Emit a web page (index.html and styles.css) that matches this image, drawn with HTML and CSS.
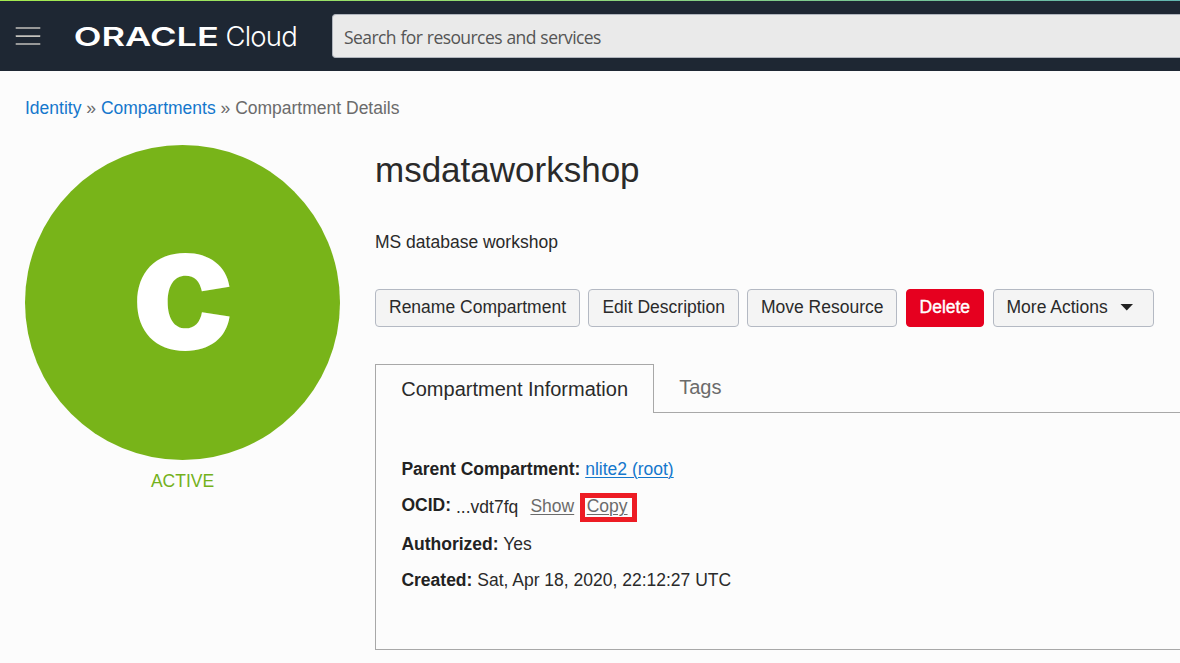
FILE: index.html
```html
<!DOCTYPE html>
<html lang="en">
<head>
<meta charset="utf-8">
<title>Compartment Details</title>
<link rel="stylesheet" href="styles.css">
</head>
<body>
<header class="topbar">
  <svg class="menu-icon" width="26" height="20" viewBox="0 0 26 20" fill="none">
    <path d="M.7 2H25.3M.7 10H25.3M.7 18H25.3" stroke="#979898" stroke-width="2"/>
    <path d="M1 10.5H25" stroke="#c4c3bd"/>
  </svg>
  <svg class="logo" width="224" height="30" viewBox="0 0 224 30" fill="#fff">
    <text class="logo-oracle" x="-1.2" y="24.5" textLength="145" lengthAdjust="spacingAndGlyphs">ORACLE</text>
    <text class="logo-cloud" x="150.5" y="24.7" textLength="71.5" lengthAdjust="spacingAndGlyphs">Cloud</text>
  </svg>
  <div class="search">Search for resources and services</div>
</header>
<nav class="breadcrumb"><a>Identity</a> » <a>Compartments</a> » Compartment Details</nav>
<main class="page">
  <aside class="status">
    <div class="badge">
      <svg width="315" height="315" viewBox="0 0 315 315">
        <text class="badge-letter" x="106" y="204" textLength="104.5" lengthAdjust="spacingAndGlyphs">c</text>
      </svg>
    </div>
    <div class="state">ACTIVE</div>
  </aside>
  <section class="details">
    <h1 class="title">msdataworkshop</h1>
    <p class="description">MS database workshop</p>
    <div class="actions">
      <button class="btn">Rename Compartment</button>
      <button class="btn snug">Edit Description</button>
      <button class="btn snug">Move Resource</button>
      <button class="btn danger">Delete</button>
      <button class="btn more">More Actions
        <svg width="14" height="8" viewBox="0 0 14 8"><path d="M.5 1H13L6.75 7.5Z" fill="#222"/></svg>
      </button>
    </div>
    <div class="tabs">
      <div class="tab active">Compartment Information</div>
      <div class="tab">Tags</div>
    </div>
    <div class="panel">
      <div class="row"><b>Parent Compartment:</b> <a class="link">nlite2 (root)</a></div>
      <div class="row ocid"><b>OCID:</b><span class="value">...vdt7fq</span><a class="muted">Show</a><a class="muted copy">Copy</a></div>
      <div class="row short"><b>Authorized:</b> Yes</div>
      <div class="row"><b>Created:</b> Sat, Apr 18, 2020, 22:12:27 UTC</div>
    </div>
  </section>
</main>
</body>
</html>
```
FILE: styles.css
```css
* { box-sizing: border-box; }
body {
  margin: 0;
  height: 663px;
  overflow: hidden;
  background: #fcfcfc;
  color: #2a2a2a;
  font: 17.5px/20px "Liberation Sans", Arial, sans-serif;
}
.topbar {
  height: 71px;
  display: flex;
  align-items: flex-start;
  background: linear-gradient(90deg, #a4ea4f, #8fd77a 50%, #62b5b0) top / 100% 1px no-repeat #1e2733;
}
.menu-icon { margin: 26px 0 0 15px; }
.logo { margin: 21px 0 0 34px; overflow: visible; }
.logo-oracle { font: 600 26px Inter, sans-serif; }
.logo-cloud { font: 300 27px Inter, sans-serif; letter-spacing: -.8px; }
.search {
  flex: 1;
  height: 44px;
  margin: 14px 0 0 33px;
  padding: 0 11px;
  border: 1px solid #b0b5bd;
  border-right: 0;
  border-radius: 4px 0 0 4px;
  background: #eaeaea;
  color: #555;
  font: 17.5px/45px "Open Sans", sans-serif;
  letter-spacing: -.57px;
  word-spacing: .5px;
  white-space: nowrap;
}
.breadcrumb { margin: 27px 0 0 25px; color: #6b6b6b; }
.breadcrumb a, .link { color: #1477cc; }
.page { display: flex; gap: 35px; padding: 27px 0 0 25px; }
.status { flex: none; width: 315px; }
.badge { height: 315px; border-radius: 50%; background: #78b419; }
.badge-letter { font: 800 174px Inter, sans-serif; fill: #fff; }
.state { margin-top: 11px; text-align: center; color: #74b11b; }
.details { flex: 1; min-width: 0; }
.title { margin: 5px 0 0; font-size: 35px; line-height: 40px; font-weight: 400; }
.description { margin: 42px 0 0; }
.actions { display: flex; margin-top: 37px; gap: 8.4px; }
.btn {
  height: 38px;
  padding: 0 13px 2px;
  border: 1px solid #b4b9c3;
  border-radius: 4px;
  background: #f4f4f4;
  color: #2a2a2a;
  font: inherit;
  white-space: nowrap;
}
.snug { padding-right: 12.6px; }
.danger { border-color: #e6001f; background: #e6001f; color: #fff; -webkit-text-stroke: .4px #fff; }
.more { display: flex; align-items: center; gap: 12.5px; padding-right: 18.5px; }
.tabs { display: flex; margin-top: 37px; height: 49px; font-size: 20px; line-height: 24px; }
.tab { padding: 11px 25.5px; color: #6b6b6b; border-bottom: 1px solid #a8a8a8; }
.tab:last-child { flex: 1; }
.active { padding: 12px 24.7px 12px 25.3px; color: #2a2a2a; border: 1px solid #a8a8a8; border-bottom: 0; }
.panel { height: 237px; padding: 46px 26px 0 25.4px; border: solid #a8a8a8; border-width: 0 0 1px 1px; }
.row { height: 37px; }
.short { height: 36px; }
b { color: #222; }
.link, .muted { text-decoration: underline; text-underline-offset: 2px; text-decoration-thickness: 1px; }
.ocid { display: flex; align-items: flex-start; height: 38px; }
.ocid b { margin-top: -1px; }
.value { margin: 1px 12.2px 0 5px; }
.muted { color: #6b6b6b; }
.copy { height: 29px; margin: -3px 0 0 6px; padding: 0 4px 0 1.5px; border: solid #ed1c24; border-width: 5px; line-height: 16px; }
```
